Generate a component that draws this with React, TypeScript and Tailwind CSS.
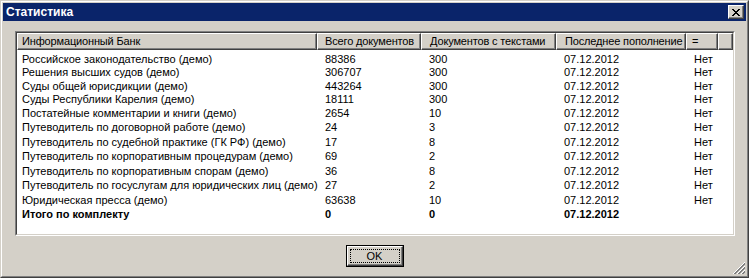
import React from 'react';

interface Row {
  name: string;
  total: string;
  withText: string;
  date: string;
  eq: string;
  h: number;
}

const rows: Row[] = [
  { name: 'Российское законодательство (демо)', total: '88386', withText: '300', date: '07.12.2012', eq: 'Нет', h: 13 },
  { name: 'Решения высших судов (демо)', total: '306707', withText: '300', date: '07.12.2012', eq: 'Нет', h: 13 },
  { name: 'Суды общей юрисдикции (демо)', total: '443264', withText: '300', date: '07.12.2012', eq: 'Нет', h: 14 },
  { name: 'Суды Республики Карелия (демо)', total: '18111', withText: '300', date: '07.12.2012', eq: 'Нет', h: 13 },
  { name: 'Постатейные комментарии и книги (демо)', total: '2654', withText: '10', date: '07.12.2012', eq: 'Нет', h: 14 },
  { name: 'Путеводитель по договорной работе (демо)', total: '24', withText: '3', date: '07.12.2012', eq: 'Нет', h: 15 },
  { name: 'Путеводитель по судебной практике (ГК РФ) (демо)', total: '17', withText: '8', date: '07.12.2012', eq: 'Нет', h: 14 },
  { name: 'Путеводитель по корпоративным процедурам (демо)', total: '69', withText: '2', date: '07.12.2012', eq: 'Нет', h: 15 },
  { name: 'Путеводитель по корпоративным спорам (демо)', total: '36', withText: '8', date: '07.12.2012', eq: 'Нет', h: 14 },
  { name: 'Путеводитель по госуслугам для юридических лиц (демо)', total: '27', withText: '2', date: '07.12.2012', eq: 'Нет', h: 15 },
  { name: 'Юридическая пресса (демо)', total: '63638', withText: '10', date: '07.12.2012', eq: 'Нет', h: 14 },
];

function HeaderCell({ w, pl, children }: { w: string; pl: string; children?: React.ReactNode }) {
  return (
    <div
      className={`${w} ${pl} h-full flex items-center border-t border-l border-t-white border-l-white border-r border-b border-r-[#404040] border-b-[#404040] shadow-[inset_-1px_-1px_0_#808080] whitespace-nowrap overflow-hidden`}
    >
      {children}
    </div>
  );
}

export default function App() {
  return (
    <div className="w-[749px] h-[278px] bg-[#d4d0c8] font-['Liberation_Sans',Arial,sans-serif] text-[11px] text-black border border-t-[#d4d0c8] border-l-[#d4d0c8] border-r-[#404040] border-b-[#404040]">
      <div className="relative h-full flex flex-col p-px border border-t-white border-l-white border-r-[#808080] border-b-[#808080]">
        {/* Title bar */}
        <div className="h-[18px] bg-[#0a246a] flex items-center justify-between pl-[3px] pr-[2px]">
          <span className="text-white font-bold text-[12px] leading-none">Статистика</span>
          <div className="w-[16px] h-[14px] bg-[#d4d0c8] flex items-center justify-center border border-t-white border-l-white border-r-[#404040] border-b-[#404040] shadow-[inset_-1px_-1px_0_#808080]">
            <svg width="8" height="7" viewBox="0 0 8 7" shapeRendering="crispEdges">
              <path d="M0 0h2v1H0zM6 0h2v1H6zM1 1h2v1H1zM5 1h2v1H5zM2 2h4v1H2zM3 3h2v1H3zM2 4h4v1H2zM1 5h2v1H1zM5 5h2v1H5zM0 6h2v1H0zM6 6h2v1H6z" fill="#000" />
            </svg>
          </div>
        </div>

        {/* List view */}
        <div className="mt-[10px] ml-[12px] mr-[11px] h-[205px] border border-t-[#808080] border-l-[#808080] border-r-white border-b-white">
          <div className="h-full bg-white border border-t-[#404040] border-l-[#404040] border-r-[#d4d0c8] border-b-[#d4d0c8] flex flex-col">
            <div className="h-[17px] flex bg-[#d4d0c8] shrink-0 tracking-[-0.15px]">
              <HeaderCell w="w-[300px]" pl="pl-[4px]">Информационный Банк</HeaderCell>
              <HeaderCell w="w-[104px]" pl="pl-[7px]">Всего документов</HeaderCell>
              <HeaderCell w="w-[135px]" pl="pl-[8px]">Документов с текстами</HeaderCell>
              <HeaderCell w="w-[130px]" pl="pl-[8px]">Последнее пополнение</HeaderCell>
              <HeaderCell w="w-[32px]" pl="pl-[5px]">=</HeaderCell>
              <HeaderCell w="flex-1" pl="pl-0" />
            </div>
            <div className="pt-[3px] flex flex-col">
              {rows.map((r, i) => (
                <div key={i} className="flex items-center whitespace-nowrap" style={{ height: r.h }}>
                  <div className="w-[300px] pl-[5px]">{r.name}</div>
                  <div className="w-[104px] pl-[8px]">{r.total}</div>
                  <div className="w-[135px] pl-[8px]">{r.withText}</div>
                  <div className="w-[130px] pl-[8px]">{r.date}</div>
                  <div className="w-[32px] pl-[8px]">{r.eq}</div>
                </div>
              ))}
              <div className="h-[14px] flex items-center whitespace-nowrap font-bold">
                <div className="w-[300px] pl-[5px]">Итого по комплекту</div>
                <div className="w-[104px] pl-[8px]">0</div>
                <div className="w-[135px] pl-[8px]">0</div>
                <div className="w-[130px] pl-[8px]">07.12.2012</div>
                <div className="w-[32px] pl-[8px]" />
              </div>
            </div>
          </div>
        </div>

        {/* OK button */}
        <div className="mt-[9px] flex justify-center">
          <div className="w-[58px] h-[22px] border border-black">
            <div className="h-full border border-t-white border-l-white border-r-[#404040] border-b-[#404040] shadow-[inset_-1px_-1px_0_#808080] p-[2px]">
              <div className="h-full border border-dotted border-black flex items-center justify-center">
                OK
              </div>
            </div>
          </div>
        </div>

        {/* Resize grip */}
        <svg className="absolute right-[1px] bottom-[1px]" width="13" height="13" viewBox="0 0 13 13" shapeRendering="crispEdges">
          <path d="M12 0L0 12M12 4L4 12M12 8L8 12" stroke="#fff" strokeWidth="1" />
          <path d="M12 1L1 12M12 2L2 12M12 5L5 12M12 6L6 12M12 9L9 12M12 10L10 12" stroke="#808080" strokeWidth="1" />
        </svg>
      </div>
    </div>
  );
}
